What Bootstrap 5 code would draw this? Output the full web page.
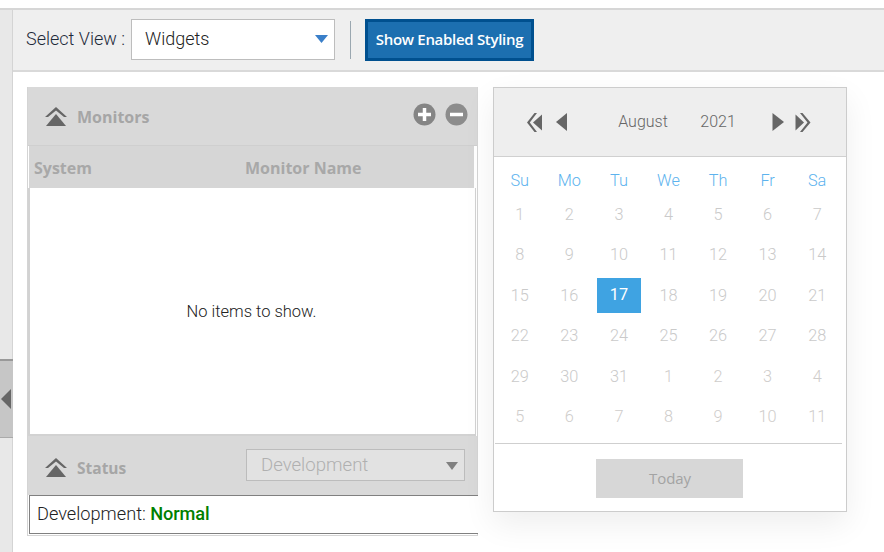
<!DOCTYPE html>
<html lang="en">
<head>
<meta charset="utf-8">
<title>Widgets</title>
<link rel="stylesheet" href="https://cdn.jsdelivr.net/npm/bootstrap@5.3.0/dist/css/bootstrap.min.css">
<style>
html,body{height:552px;overflow:hidden;background:#fff;}
body{font-family:Roboto,"Liberation Sans",sans-serif;font-weight:300;color:#222;padding-top:8px;position:relative;}
.shell{height:544px;border-top:2px solid #d6d6d6;}
.side-rail{width:13px;background:#e8e8e8;border-right:1px solid #d4d4d4;flex:none;}
.side-handle{position:absolute;left:0;top:359px;width:13px;height:79px;background:#c6c6c6;border-top:2px solid #999;border-bottom:1px solid #aaa;}
.tool-strip{height:62px;background:#efefef;border-bottom:2px solid #d9d9d9;padding:9px 0 0 13px;}
.view-label{font-size:18px;color:#1e2a3a;width:105px;line-height:40px;}
.view-select{width:204px;height:41px;background:#fff;border:1px solid #bdbdbd;padding:0 0 2px 13px;font-size:18px;color:#222;}
.view-caret{margin-right:6px;}
.strip-rule{width:1px;height:38px;background:#9aa7b0;margin:2px 14px 0 15px;}
.enable-btn{height:42px;width:169px;padding:0 0 2px;background:#1c6fb0;border:3px solid #00508f;border-radius:0;color:#fff;font:600 15px/1 "Open Sans",sans-serif;letter-spacing:-.3px;}
.work-area{padding:15px 0 0 14px;gap:15px;}
.monitor-pane{width:451px;height:449px;border:1px solid #d4d4d4;border-top:0;background:#fff;}
.pane-head{height:59px;background:#d9d9d9;border-bottom:1px solid #cfcfcf;padding:0 9px 0 17px;flex:none;}
.pane-title{font:700 16px/1 "Open Sans",sans-serif;color:#a6a6a6;margin-left:10px;padding-top:2px;}
.pane-title-sm{font-size:15.5px;}
.pane-tools{gap:9px;margin-bottom:4px;}
.grid-head{height:42px;background:#d6d6d6;flex:none;margin:0 3px 0 1px;padding-top:2px;font:700 16px/1 "Open Sans",sans-serif;color:#a8a8a8;}
.grid-head span:first-child{width:216px;padding-left:5px;}
.grid-body{flex:1;border:2px solid #d2d2d2;border-top:0;border-right-width:1px;margin-right:1px;font-size:16.5px;color:#222;padding:2px 2px 0 0;}
.status-head{height:59px;background:#d9d9d9;flex:none;padding:0 12px 0 17px;}
.status-left{padding-top:4px;}
.dev-select{width:219px;height:32px;margin-top:-1px;background:#e2e2e2;border:1px solid #bcbcbc;font-size:18.6px;color:#b0b0b0;padding:2px 6px 0 14px;}
.status-line{height:39px;flex:none;border:1px solid #808080;border-right:0;font-size:18.2px;padding:0 0 2px 7px;background:#fff;margin:0 -1px 1px 1px;color:#222;font-weight:300;}
.status-ok{color:#008000;font-weight:500;letter-spacing:-.1px;}
.calendar-pane{width:354px;height:425px;border:1px solid #ccc;background:#fff;box-shadow:0 12px 30px rgba(0,0,0,.07);}
.cal-head{height:69px;background:#eee;border-bottom:1px solid #d0d0d0;font-size:16px;color:#666;padding-left:33px;}
.cal-prev{margin-left:14px;}
.cal-month{width:90px;text-align:center;margin-left:31px;}
.cal-year{width:54px;text-align:center;margin-left:3px;}
.cal-next{margin-left:27px;}
.cal-last{margin-left:11px;}
.cal-grid{display:grid;grid-template-columns:repeat(7,49.57px);grid-template-rows:36.75px;grid-auto-rows:40.5px;padding-left:1px;font-size:16.3px;text-align:center;height:286px;}
.cal-grid>div{display:flex;align-items:center;justify-content:center;}
.cal-dow{color:#5db3ee;height:26px;align-self:end;}
.cal-in{color:#cacaca;padding-top:2px;}
.cal-out{color:#cfcdcb;padding-top:2px;}
.cal-sel{background:#3fa3e2;color:#fff;font-weight:400;width:44px;height:35px;justify-self:center;align-self:center;padding-top:1px;}
.cal-foot{border-top:1px solid #cfcfcf;margin:0 4px 0 1px;padding:15px 0 0 2px;}
.today-btn{width:147px;height:39px;background:#d7d7d7;color:#a3a3a3;border:0;border-radius:0;padding:0 0 0 1px;font:400 15px/1 "Open Sans",sans-serif;letter-spacing:-.1px;}
.handle-mark{margin-left:1px;}
svg{display:block;flex:none;}
</style>
</head>
<body>
<div class="shell d-flex">
  <div class="side-rail"></div>
  <div class="flex-grow-1 d-flex flex-column">
    <div class="tool-strip d-flex align-items-start">
      <span class="view-label">Select View :</span>
      <div class="view-select d-flex align-items-center justify-content-between">Widgets
        <svg class="view-caret" width="13" height="8" viewBox="0 0 13 8"><path d="M0 0H13L6.500 8Z" fill="#3a7fc9"/></svg>
      </div>
      <div class="strip-rule"></div>
      <button class="enable-btn btn" type="button">Show Enabled Styling</button>
    </div>
    <div class="work-area d-flex align-items-start">
      <div class="monitor-pane d-flex flex-column">
        <div class="pane-head d-flex align-items-center justify-content-between">
          <div class="d-flex align-items-center">
            <svg width="22" height="19" viewBox="0 0 22 19"><path d="M11 0 22 10H19L11 3.500 3 10H0Z" fill="#666"/><path d="M11 7 21 19H1Z" fill="#666"/></svg>
            <span class="pane-title">Monitors</span>
          </div>
          <div class="pane-tools d-flex">
            <svg width="23" height="23" viewBox="0 0 23 23"><circle cx="11.500" cy="11.500" r="11" fill="#858585"/><path d="M5 11.500H18M11.500 5V18" stroke="#fff" stroke-width="3.500"/></svg>
            <svg width="23" height="23" viewBox="0 0 23 23"><circle cx="11.500" cy="11.500" r="11" fill="#8c8c8c"/><path d="M5 11.500H18" stroke="#fff" stroke-width="3.500"/></svg>
          </div>
        </div>
        <div class="grid-head d-flex align-items-center"><span>System</span><span>Monitor Name</span></div>
        <div class="grid-body d-flex align-items-center justify-content-center">No items to show.</div>
        <div class="status-head d-flex align-items-center justify-content-between">
          <div class="status-left d-flex align-items-center">
            <svg width="22" height="19" viewBox="0 0 22 19"><path d="M11 0 22 10H19L11 3.500 3 10H0Z" fill="#666"/><path d="M11 7 21 19H1Z" fill="#666"/></svg>
            <span class="pane-title pane-title-sm">Status</span>
          </div>
          <div class="dev-select d-flex align-items-center justify-content-between">Development
            <svg width="12" height="8" viewBox="0 0 12 8"><path d="M0 0H12L6 8Z" fill="#808080"/></svg>
          </div>
        </div>
        <div class="status-line d-flex align-items-center"><span>Development: <span class="status-ok">Normal</span></span></div>
      </div>
      <div class="calendar-pane d-flex flex-column">
        <div class="cal-head d-flex align-items-center">
          <svg width="15" height="19" viewBox="0 0 15 19"><path d="M7.500 0 0 9.500 7.500 19H10L2.800 9.500 10 0Z" fill="#666"/><path d="M15 1.500V17.500L6 9.500Z" fill="#666"/></svg>
          <svg class="cal-prev" width="11" height="18" viewBox="0 0 11 18"><path d="M11 0V18L0 9Z" fill="#666"/></svg>
          <span class="cal-month">August</span>
          <span class="cal-year">2021</span>
          <svg class="cal-next" width="12" height="18" viewBox="0 0 12 18"><path d="M.5 0V18L12 9Z" fill="#666"/></svg>
          <svg class="cal-last" width="16" height="19" viewBox="0 0 16 19"><path d="M7.500 0 15.500 9.500 7.500 19H5L12.500 9.500 5 0Z" fill="#666"/><path d="M.5 1.500V17.500L9 9.500Z" fill="#666"/></svg>
        </div>
        <div class="cal-grid">
          <div class="cal-dow">Su</div><div class="cal-dow">Mo</div><div class="cal-dow">Tu</div><div class="cal-dow">We</div><div class="cal-dow">Th</div><div class="cal-dow">Fr</div><div class="cal-dow">Sa</div>
          <div class="cal-in">1</div><div class="cal-in">2</div><div class="cal-in">3</div><div class="cal-in">4</div><div class="cal-in">5</div><div class="cal-in">6</div><div class="cal-in">7</div>
          <div class="cal-in">8</div><div class="cal-in">9</div><div class="cal-in">10</div><div class="cal-in">11</div><div class="cal-in">12</div><div class="cal-in">13</div><div class="cal-in">14</div>
          <div class="cal-in">15</div><div class="cal-in">16</div><div class="cal-sel">17</div><div class="cal-in">18</div><div class="cal-in">19</div><div class="cal-in">20</div><div class="cal-in">21</div>
          <div class="cal-in">22</div><div class="cal-in">23</div><div class="cal-in">24</div><div class="cal-in">25</div><div class="cal-in">26</div><div class="cal-in">27</div><div class="cal-in">28</div>
          <div class="cal-in">29</div><div class="cal-in">30</div><div class="cal-in">31</div><div class="cal-out">1</div><div class="cal-out">2</div><div class="cal-out">3</div><div class="cal-out">4</div>
          <div class="cal-out">5</div><div class="cal-out">6</div><div class="cal-out">7</div><div class="cal-out">8</div><div class="cal-out">9</div><div class="cal-out">10</div><div class="cal-out">11</div>
        </div>
        <div class="cal-foot d-flex justify-content-center"><button class="today-btn btn" type="button">Today</button></div>
      </div>
    </div>
  </div>
</div>
<div class="side-handle d-flex align-items-center"><svg class="handle-mark" width="10" height="20" viewBox="0 0 10 20"><path d="M10 0V20L0 10Z" fill="#666"/></svg></div>
<script src="https://cdn.jsdelivr.net/npm/bootstrap@5.3.0/dist/js/bootstrap.bundle.min.js"></script>
</body>
</html>
